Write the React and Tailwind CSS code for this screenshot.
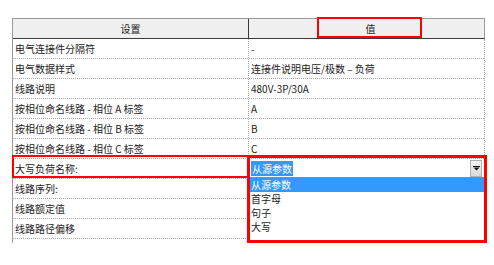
import React from 'react';

const rows = [
  ['电气连接件分隔符', '-'],
  ['电气数据样式', '连接件说明电压/极数 – 负荷'],
  ['线路说明', '480V-3P/30A'],
  ['按相位命名线路 - 相位 A 标签', 'A'],
  ['按相位命名线路 - 相位 B 标签', 'B'],
  ['按相位命名线路 - 相位 C 标签', 'C'],
];

const after = ['线路序列:', '线路额定值', '线路路径偏移'];

const options = ['从源参数', '首字母', '句子', '大写'];

const Row = ({ name, value, children }) => (
  <div className="flex h-[20px] border-b border-dotted border-[#a8a8a8]">
    <div className="w-[236px] pl-[2px] leading-[19px] border-r border-dotted border-[#a8a8a8] whitespace-nowrap">
      {name}
    </div>
    <div className="flex-1 pl-[2px] leading-[19px] whitespace-nowrap">{children ?? value}</div>
  </div>
);

export default function App() {
  return (
    <div
      className="relative w-[494px] h-[265px] bg-white text-[10px] text-[#1c1c1c] overflow-hidden"
      style={{ fontFamily: '"Noto Sans CJK SC", "Noto Sans", sans-serif' }}
    >
      <div className="ml-[12px] mt-[18px] w-[473px] border-l border-t border-[#9a9a9a] border-r-0">
        {/* header */}
        <div className="flex h-[20px] bg-[#f0f0f0] border-b border-[#3a3a3a] border-r border-r-[#9a9a9a]">
          <div className="w-[236px] flex items-center justify-center border-r border-[#3a3a3a]">设置</div>
          <div className="flex-1 flex items-center justify-center pl-[8px]">值</div>
        </div>
        <div className="border-r border-dotted border-[#a8a8a8]">
          {rows.map(([n, v]) => (
            <Row key={n} name={n} value={v} />
          ))}
          <Row name="大写负荷名称:">
            <div className="flex items-center h-[19px] pr-[2px]">
              <span className="bg-[#3399ff] text-white leading-[15px] px-[1px]">从源参数</span>
              <div className="ml-auto w-[12px] h-[17px] bg-gradient-to-b from-[#f4f4f4] to-[#d8d8d8] border border-[#b0b0b0] flex items-center justify-center">
                <svg width="7" height="5" viewBox="0 0 7 5">
                  <rect x="0" y="0" width="7" height="1" fill="#111" />
                  <polygon points="0.5,1.5 6.5,1.5 3.5,4.5" fill="#111" />
                </svg>
              </div>
            </div>
          </Row>
          {after.map((n) => (
            <Row key={n} name={n} value="" />
          ))}
        </div>
        <div className="h-[4px] w-[1px]" />
      </div>

      {/* dropdown list */}
      <div className="absolute left-[249px] top-[177px] w-[236px] h-[64px] bg-white border-t border-[#8a8a8a]">
        {options.map((o, i) => (
          <div
            key={o}
            className={`h-[14px] leading-[14px] pl-[2px] ${i === 0 ? 'bg-[#3399ff] text-white' : ''}`}
          >
            {o}
          </div>
        ))}
      </div>

      {/* annotation boxes */}
      <div className="absolute left-[317px] top-[17px] w-[105px] h-[21px] border-2 border-[#ff0000]" />
      <div className="absolute left-[12px] top-[155px] w-[238px] h-[23px] border-2 border-[#ff0000]" />
      <div className="absolute left-[247px] top-[155px] w-[240px] h-[88px] border-[3px] border-[#ff0000]" />
    </div>
  );
}
